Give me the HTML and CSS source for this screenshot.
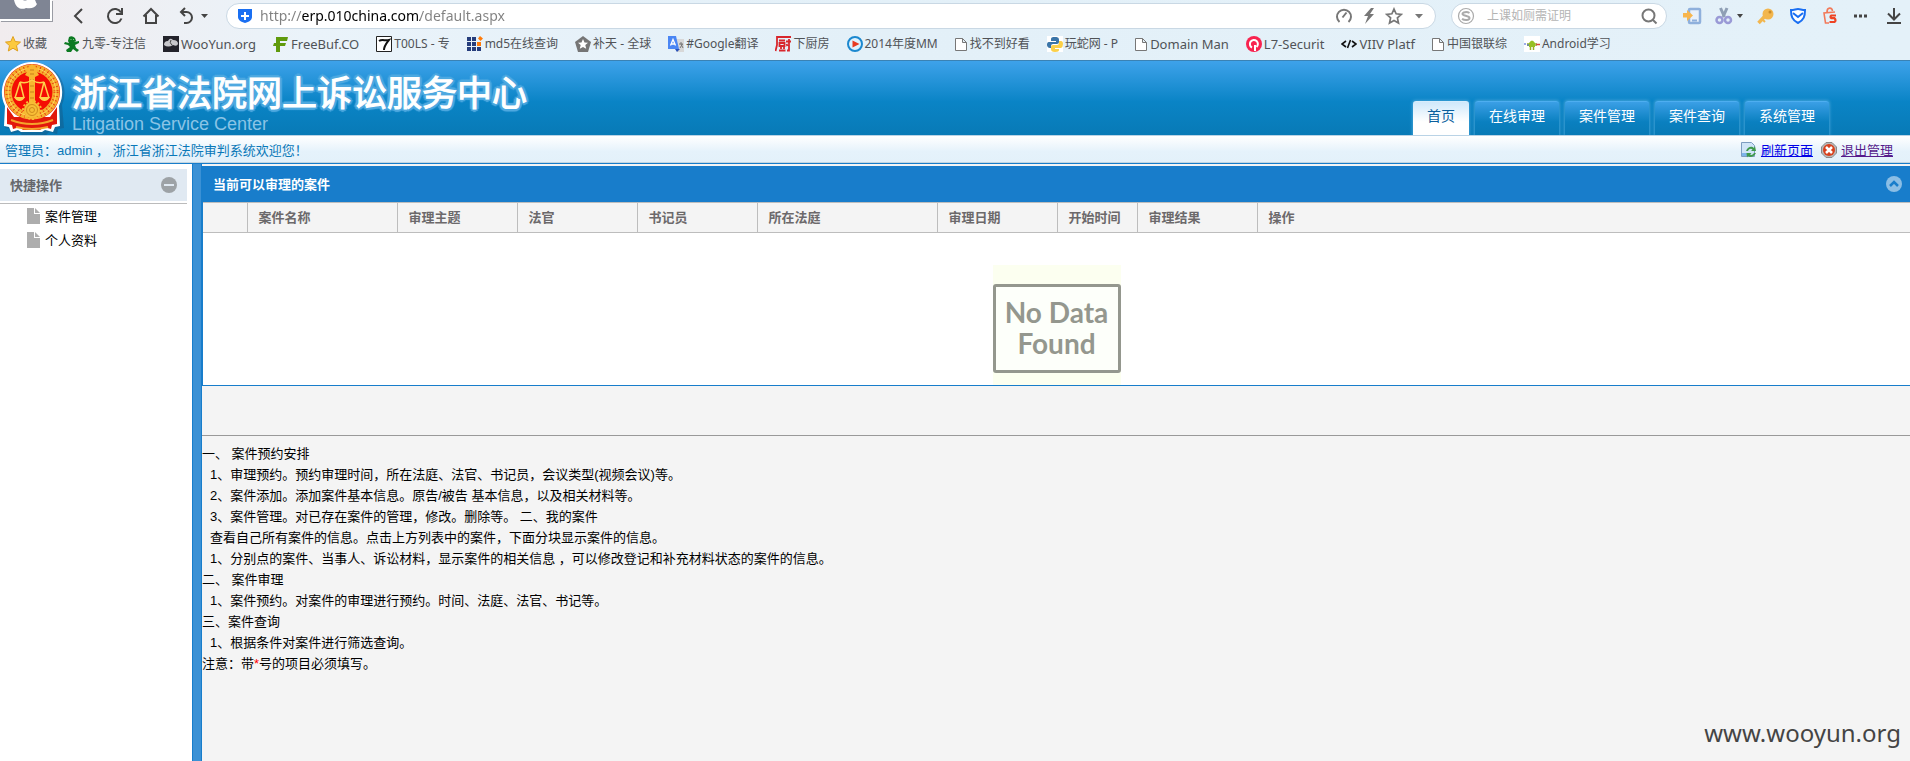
FILE: index.html
```html
<!DOCTYPE html>
<html lang="zh-CN">
<head>
<meta charset="utf-8">
<title>浙江省法院网上诉讼服务中心</title>
<link rel="stylesheet" href="styles.css">
</head>
<body>
<div class="browser">
  <div class="toolbar">
    <div class="avatar">
      <svg width="50" height="20" viewBox="0 0 50 20"><path d="M14 0h9q2 1 4 0h8c1 2 1 3 2 4-2 4-6 5-11 4-4 2-10 1-12-8z" fill="#fff"/></svg>
    </div>
    <div class="nav">
      <button class="tool" aria-label="后退"><svg width="20" height="20" viewBox="0 0 20 20"><path d="M13 3L6 10l7 7" fill="none" stroke="#444" stroke-width="2"/></svg></button>
      <button class="tool" aria-label="刷新"><svg width="20" height="20" viewBox="0 0 20 20"><path d="M16.500 12.500A7 7 0 1 1 16 6.500M17 2v6h-6" fill="none" stroke="#444" stroke-width="2"/></svg></button>
      <button class="tool" aria-label="主页"><svg width="20" height="20" viewBox="0 0 20 20"><path d="M2.500 10.500L10 3l7.500 7.500M5 9v8h10V9" fill="none" stroke="#444" stroke-width="2"/></svg></button>
      <button class="tool undo" aria-label="恢复"><svg width="32" height="20" viewBox="0 0 32 20"><path d="M8 2L4 6l4 4M4 6h5.500a5.500 5.500 0 0 1 0 11H7" fill="none" stroke="#444" stroke-width="2"/><path d="M24 8h7l-3.500 4z" fill="#444"/></svg></button>
    </div>
    <div class="address">
      <svg width="16" height="18" viewBox="0 0 16 18"><path d="M1 2h14v8c0 3-3 5-7 6-4-1-7-3-7-6z" fill="#1a6ff2"/><path d="M8 5v8M4 9h8" stroke="#fff" stroke-width="2"/></svg>
      <input class="url" type="text" aria-label="地址" value="http://erp.010china.com/default.aspx">
      <button class="tool small" aria-label="测速"><svg width="18" height="18" viewBox="0 0 18 18"><path d="M4.500 15a7 7 0 1 1 9 0M7.500 10.500l4-5" fill="none" stroke="#777" stroke-width="2"/></svg></button>
      <button class="tool small" aria-label="加速"><svg width="18" height="18" viewBox="0 0 18 18"><path d="M11 1L4 9h4l-3 8 9-10h-4l4-6z" fill="#777"/></svg></button>
      <button class="tool small" aria-label="收藏本页"><svg width="18" height="18" viewBox="0 0 18 18"><path d="M9 2l2.100 4.800 5.200.6-3.900 3.500 1.100 5.100L9 13.400 4.500 16l1.100-5.100L1.700 7.400l5.200-.6z" fill="none" stroke="#777" stroke-width="1.700"/></svg></button>
      <button class="tool small" aria-label="更多地址"><svg width="18" height="18" viewBox="0 0 18 18"><path d="M5 7h8l-4 4.500z" fill="#777"/></svg></button>
    </div>
    <div class="search">
      <svg width="18" height="18" viewBox="0 0 18 18"><circle cx="9" cy="9" r="7.500" fill="none" stroke="#aaa" stroke-width="1.200"/><path d="M12.500 6C10 4.500 5.500 5 5.500 7s7 1.500 7 4-5 2.500-7.500.8" fill="none" stroke="#aaa" stroke-width="2"/></svg>
      <input class="query" type="text" aria-label="搜索" placeholder="上课如厕需证明">
      <button class="tool small" aria-label="搜索"><svg width="18" height="18" viewBox="0 0 18 18"><circle cx="8.500" cy="8.500" r="6" fill="none" stroke="#777" stroke-width="2"/><path d="M12.500 12.500l4 4" stroke="#777" stroke-width="2"/></svg></button>
    </div>
    <div class="extras">
      <button class="tool" aria-label="手机"><svg width="20" height="20" viewBox="0 0 20 20"><rect x="7" y="3" width="11" height="14" rx="1" fill="#e8f0fa" stroke="#8fb0dc" stroke-width="2.500"/><path d="M10 14.500h5" stroke="#8fb0dc" stroke-width="2"/><path d="M1 7h4V4l6 5.500L5 15v-3.500H1z" fill="#f7b54c"/></svg></button>
      <button class="tool cut" aria-label="截图"><svg width="30" height="20" viewBox="0 0 30 20"><path d="M6.500 2l4 9M13 2L9 11" stroke="#8f9fb5" stroke-width="3"/><circle cx="5.500" cy="14" r="3" fill="none" stroke="#9a9ad6" stroke-width="2.500"/><circle cx="14" cy="14" r="3" fill="none" stroke="#9a9ad6" stroke-width="2.500"/><path d="M23 8h6l-3 4z" fill="#444"/></svg></button>
      <button class="tool" aria-label="密码"><svg width="20" height="20" viewBox="0 0 20 20"><path d="M10 9L2.500 17" stroke="#f2b64e" stroke-width="3.500"/><path d="M6 13l3 3" stroke="#f2b64e" stroke-width="2"/><circle cx="12" cy="8" r="5.500" fill="#f2b64e"/><circle cx="14" cy="6" r="1.500" fill="#c98a28"/></svg></button>
      <button class="tool" aria-label="安全"><svg width="20" height="20" viewBox="0 0 20 20"><path d="M3 4c3 0 5-1 7-1s4 1 7 1c0 6-1 10-7 13C4 14 3 10 3 4z" fill="#fff" stroke="#1a6ff2" stroke-width="2"/><path d="M5 7l5 4 5-4" fill="none" stroke="#1a6ff2" stroke-width="2"/></svg></button>
      <button class="tool" aria-label="购物"><svg width="20" height="20" viewBox="0 0 20 20"><path d="M15 6L4 7l1.500 10H9M7 6c0-5 5-5 5.500-1" fill="none" stroke="#f27a5a" stroke-width="1.600"/><path d="M16 9.500h-4.500q-2 1.500 0 2.700h3q2 2 0 3.800H9.500" fill="none" stroke="#ee4424" stroke-width="2.200"/></svg></button>
      <button class="tool" aria-label="菜单"><svg width="20" height="20" viewBox="0 0 20 20"><path d="M2 8.500h3v3H2zM7 8.500h3v3H7zM12 8.500h3v3h-3z" fill="#444"/></svg></button>
      <button class="tool" aria-label="下载"><svg width="20" height="20" viewBox="0 0 20 20"><path d="M10 2v11M4 7.500l6 6 6-6M3 17h14" fill="none" stroke="#444" stroke-width="2"/></svg></button>
    </div>
  </div>
  <nav class="bookmarks">
    <a href="#"><svg width="16" height="16" viewBox="0 0 16 16"><path d="M8 .5l2.200 5 5.300.6-4 3.500 1.200 5.400L8 12.200 3.300 15l1.200-5.400-4-3.500 5.300-.6z" fill="#fcca3f" stroke="#dfa01f"/></svg>收藏</a>
    <a href="#"><svg width="16" height="16" viewBox="0 0 16 16"><path d="M5 1q3-2 6 1l1 3-2 1 5-1v2l-4 2 1 3 3 2-2 2-4-3-2 3-4 0-1-2 4-3-2-2-4-1 1-2 4 1-1-2z" fill="#0c7a22"/><path d="M6.500 3h1v1h-1zM9 3h1v1H9z" fill="#7fd08a"/></svg>九零-专注信</a>
    <a class="latin" href="#"><svg width="16" height="16" viewBox="0 0 16 16"><path d="M0 0h16v16H0z" fill="#23232b"/><path d="M1 9q0-4 4-4 2-4 5-1 5 0 5 4-1 3-5 1-5 3-9 0z" fill="#c8c8cc"/><path d="M8 4q-2 3 1 5" stroke="#444" fill="none"/></svg>WooYun.org</a>
    <a class="latin" href="#"><svg width="16" height="16" viewBox="0 0 16 16"><path d="M3 1h12l-1 4H7v2h6l-1 3H7v6H3v-6H0l1-3h2z" fill="#5f9a0c"/></svg>FreeBuf.CO</a>
    <a href="#"><svg width="16" height="16" viewBox="0 0 16 16"><path d="M.5.500h15v15H.5z" fill="#fff" stroke="#222"/><path d="M3 5c3-2 6 0 10-1-3 4-5 6-5 10" fill="none" stroke="#111" stroke-width="2"/></svg>T00LS - 专</a>
    <a href="#"><svg width="16" height="16" viewBox="0 0 16 16"><path d="M0 1h4v4H0zM5 1h4v4H5zM0 6h4v4H0zM5 6h4v4H5zM0 11h4v4H0zM5 11h4v4H5zM10 11h4v4h-4z" fill="#263d7c"/><path d="M10 6h4v4h-4zM13 0l3 2.500L13.500 5 11 2.500z" fill="#ff7b0a"/></svg>md5在线查询</a>
    <a href="#"><svg width="16" height="16" viewBox="0 0 16 16"><path d="M8 0l8 6-3 10H3L0 6z" fill="#757575"/><path d="M8 3l1.500 3.500 3.500.3-2.700 2.300.9 3.700L8 11l-3.200 1.800.9-3.700L3 6.800l3.500-.3z" fill="#fff"/></svg>补天 - 全球</a>
    <a href="#"><svg width="16" height="16" viewBox="0 0 16 16"><path d="M7 3h9v13H9z" fill="#d8d8d8"/><path d="M0 0h8l3 13H0z" fill="#4a86f4"/><path d="M7 13h5l-3 3z" fill="#2850b8"/><path d="M2.500 9.500L5 3.500l2.500 6M3.500 8h3" stroke="#fff" fill="none" stroke-width="1.300"/><path d="M11 8h4M13 6v2l2 4M14.500 8L12 12" stroke="#777" fill="none"/></svg>#Google翻译</a>
    <a href="#"><svg width="16" height="16" viewBox="0 0 16 16"><path d="M16 1H2v8l-1.500 6M4 4.500h6M4.500 7h5v3h-5zM4 14.500h6.500M6 11v2M9 11v2M11 5.500h5M14 3v11.500h-2M11.500 8l1 2" fill="none" stroke="#d8262c" stroke-width="1.800"/></svg>下厨房</a>
    <a href="#"><svg width="16" height="16" viewBox="0 0 16 16"><circle cx="8" cy="8" r="7" fill="#dff2fd" stroke="#1b88cf" stroke-width="2"/><path d="M5.500 4.500l7 3.500-7 3.500z" fill="#e83a20"/></svg>2014年度MM</a>
    <a class="page" href="#"><svg width="12" height="16" viewBox="0 0 12 16"><path d="M.5 2.500h7l4 4v8H.5zM7.500 2.500v4h4" fill="#fff" stroke="#777"/></svg>找不到好看</a>
    <a href="#"><svg width="16" height="16" viewBox="0 0 16 16"><path d="M0 0h16v16H0z" fill="#fff"/><path d="M8 1c-3 0-4 0-4 3v1h5v1H2C0 6 0 8 0 9s1 3 3 3h1v-2q0-2 2-2h4q2 0 2-2V4c0-3-2-3-4-3z" fill="#3a75a8"/><path d="M12 5h2q2 0 2 3t-2 4H8v1h4v1c0 1-1 2-4 2s-4-1-4-3v-2q0-2 2-2h4q2 0 2-2z" fill="#fbd048"/></svg>玩蛇网 - P</a>
    <a class="latin page" href="#"><svg width="12" height="16" viewBox="0 0 12 16"><path d="M.5 2.500h7l4 4v8H.5zM7.500 2.500v4h4" fill="#fff" stroke="#777"/></svg>Domain Man</a>
    <a class="latin" href="#"><svg width="16" height="16" viewBox="0 0 16 16"><circle cx="8" cy="8" r="8" fill="#f8234f"/><path d="M6 11.500a4 4 0 1 1 4.500-.5M9 9v6" fill="none" stroke="#fff" stroke-width="2"/></svg>L7-Securit</a>
    <a class="latin" href="#"><svg width="16" height="16" viewBox="0 0 16 16"><path d="M5 5L1 8l4 3M11 5l4 3-4 3M9.500 4l-3 8" fill="none" stroke="#111" stroke-width="1.600"/></svg>VIIV Platf</a>
    <a class="page" href="#"><svg width="12" height="16" viewBox="0 0 12 16"><path d="M.5 2.500h7l4 4v8H.5zM7.500 2.500v4h4" fill="#fff" stroke="#777"/></svg>中国银联综</a>
    <a href="#"><svg width="16" height="16" viewBox="0 0 16 16"><path d="M0 0h16v16H0z" fill="#fff"/><path d="M5 7q3-5 6 0v4H5z" fill="#97c024"/><path d="M4 7v3M12 7v3M6.500 11v3M9.500 11v3" stroke="#97b024" stroke-width="1.500"/><path d="M12 8.500h4" stroke="#d34a3a" stroke-width="1.500"/><path d="M0 8h2M3 9h2" stroke="#3a5ad3"/></svg>Android学习</a>
  </nav>
</div>

<header class="banner">
  <svg class="emblem" width="66" height="74" viewBox="0 0 66 74">
    <path d="M32 1a30 30 0 0 1 28 42l2 23-6 1-1 5-8-2-3 3H20l-3-3-8 2-1-5-5-1 1-23A30 30 0 0 1 32 1z" fill="#1b4a70" opacity=".35" transform="translate(2 1)"/>
    <path d="M32 1a30.500 30.500 0 0 1 27 44l1 20-5 1-2 5-8-2-3 2H21l-3-2-7 2-2-5-5-1 1-20A30.500 30.500 0 0 1 32 1z" fill="#fff"/>
    <path d="M7 46l7 10h36l7-10v17l-5 1-1 4-7-2-4 3H23l-3-3-7 2-1-4-5-1z" fill="#e2180c"/>
    <circle cx="32" cy="31" r="28" fill="#e9230c"/>
    <circle cx="32" cy="31" r="24" fill="none" stroke="#f6ae2e" stroke-width="7"/>
    <circle cx="32" cy="31" r="24" fill="none" stroke="#e8440f" stroke-width="5" stroke-dasharray="1 3"/>
    <circle cx="32" cy="31" r="24" fill="none" stroke="#ffd75a" stroke-width="1"/>
    <circle cx="32" cy="31" r="20" fill="#f50c04"/>
    <path d="M32 3l3 3 3 1-1 4 2 3-4 2v26h-6V16l-4-2 2-3-2-3 4-2z" fill="#f8b62f"/>
    <path d="M30 9h4M30 13h4M30 19h4M30 25h4M30 31h4M30 37h4" stroke="#c9801a"/>
    <path d="M20 21q6 2 12-2 6 4 12 2M20 21l-5 16M20 21l4 16M44 21l-4 16M44 21l5 16" fill="none" stroke="#ffd04a" stroke-width="1.500"/>
    <path d="M14 36h11q-2 4-5.500 4T14 36zM39 36h11q-2 4-5.500 4T39 36z" fill="#ffd04a"/>
    <circle cx="32" cy="49" r="8" fill="#f7bd36"/><circle cx="32" cy="49" r="9" fill="none" stroke="#f7bd36" stroke-width="2" stroke-dasharray="2 2"/>
    <circle cx="32" cy="49" r="5.500" fill="none" stroke="#d08c1c"/><circle cx="32" cy="49" r="2.500" fill="none" stroke="#d08c1c"/>
    <path d="M11 59q10 4 21 4t21-4M16 66q8 2 16 2t16-2" fill="none" stroke="#f5a32b" stroke-width="2"/>
  </svg>
  <div class="brand">
    <h1>浙江省法院网上诉讼服务中心</h1>
    <p>Litigation Service Center</p>
  </div>
  <nav class="tabs">
    <a class="tab active" href="#">首页</a>
    <a class="tab" href="#">在线审理</a>
    <a class="tab" href="#">案件管理</a>
    <a class="tab" href="#">案件查询</a>
    <a class="tab" href="#">系统管理</a>
  </nav>
</header>

<div class="infobar">
  <p class="welcome">管理员：admin ， 浙江省浙江法院审判系统欢迎您！</p>
  <a class="action" href="#"><svg width="16" height="16" viewBox="0 0 16 16"><path d="M.5.500h10l3 3v11H.5z" fill="#cfe4f7" stroke="#7c9cc0"/><path d="M1 11h7v3H1z" fill="#7db4ea"/><path d="M5 9c2-5 6-5 8-3l1-2 1 5h-5l1.500-1.500C10 6 8 7 7 9zM15 11c-2 4-6 5-8 3l-1 1.500L5.500 11h5L9 12.500c2 1 3 0 4-1.500z" fill="#3f9a4a"/></svg><span>刷新页面</span></a>
  <a class="action visited" href="#"><svg width="16" height="16" viewBox="0 0 16 16"><path d="M5 .500h6L15.500 5v6L11 15.500H5L.5 11V5z" fill="#b9b9b9" stroke="#8a8a8a"/><circle cx="8" cy="8" r="6" fill="#d8411d"/><path d="M5 5l6 6M11 5l-6 6" stroke="#fff" stroke-width="2.500"/></svg><span>退出管理</span></a>
</div>

<div class="workspace">
  <aside class="sidebar">
    <div class="sidehead">
      <h2>快捷操作</h2>
      <button class="tool round" aria-label="折叠"><svg width="16" height="16" viewBox="0 0 16 16"><circle cx="8" cy="8" r="8" fill="#9da2a6"/><path d="M3 8h10" stroke="#e0e9f2" stroke-width="2"/></svg></button>
    </div>
    <ul class="menu">
      <li><a href="#"><svg width="13" height="16" viewBox="0 0 13 16"><path d="M0 0h7v6h6v10H0z" fill="#adadad"/><path d="M8 0l5 5H8z" fill="#adadad"/></svg>案件管理</a></li>
      <li><a href="#"><svg width="13" height="16" viewBox="0 0 13 16"><path d="M0 0h7v6h6v10H0z" fill="#adadad"/><path d="M8 0l5 5H8z" fill="#adadad"/></svg>个人资料</a></li>
    </ul>
  </aside>
  <div class="splitter"></div>
  <main class="content">
    <section class="panel">
      <div class="panelhead">
        <h2>当前可以审理的案件</h2>
        <button class="tool round" aria-label="收起"><svg width="16" height="16" viewBox="0 0 16 16"><circle cx="8" cy="8" r="8" fill="#8bbee5"/><path d="M4 10l4-4 4 4" fill="none" stroke="#187dcb" stroke-width="2.500"/></svg></button>
      </div>
      <table class="cases">
        <colgroup><col class="c-mark"><col class="c-name"><col class="c-mid"><col class="c-mid"><col class="c-mid"><col class="c-court"><col class="c-mid"><col class="c-time"><col class="c-mid"><col></colgroup>
        <thead>
          <tr><th></th><th>案件名称</th><th>审理主题</th><th>法官</th><th>书记员</th><th>所在法庭</th><th>审理日期</th><th>开始时间</th><th>审理结果</th><th>操作</th></tr>
        </thead>
        <tbody>
          <tr><td colspan="10"><div class="nodata"><div class="stamp">No Data<br>Found</div></div></td></tr>
        </tbody>
      </table>
    </section>
    <hr class="rule">
    <div class="notes">
      <p>一、 案件预约安排</p>
      <p class="sub">1、审理预约。预约审理时间，所在法庭、法官、书记员，会议类型(视频会议)等。</p>
      <p class="sub">2、案件添加。添加案件基本信息。原告/被告 基本信息，以及相关材料等。</p>
      <p class="sub">3、案件管理。对已存在案件的管理，修改。删除等。 二、我的案件</p>
      <p class="sub">查看自己所有案件的信息。点击上方列表中的案件，下面分块显示案件的信息。</p>
      <p class="sub">1、分别点的案件、当事人、诉讼材料，显示案件的相关信息 ，可以修改登记和补充材料状态的案件的信息。</p>
      <p>二、 案件审理</p>
      <p class="sub">1、案件预约。对案件的审理进行预约。时间、法庭、法官、书记等。</p>
      <p>三、案件查询</p>
      <p class="sub">1、根据条件对案件进行筛选查询。</p>
      <p>注意：带<span class="star">*</span>号的项目必须填写。</p>
    </div>
    <p class="site">www.wooyun.org</p>
  </main>
</div>
</body>
</html>
```

FILE: styles.css
```css
* { box-sizing: border-box; }
body {
  margin: 0;
  min-height: 100vh;
  display: flex;
  flex-direction: column;
  background: #f4f4f4;
  color: #000;
  font: 13px/21px "Liberation Sans", "Noto Sans CJK SC", sans-serif;
}
h1, h2, p, ul { margin: 0; padding: 0; }
svg { display: block; flex: none; }
a { text-decoration: none; }

/* browser chrome */
.browser {
  height: 61px;
  border-bottom: 1px solid #3a82b4;
  background: linear-gradient(90deg, #f1ecee, #eaf3fa 16%, #e3f0f8 45%, #e4f1f9);
  font-family: "Noto Sans", "Noto Sans CJK SC", sans-serif;
}
.toolbar { display: flex; align-items: flex-start; padding-right: 6px; height: 28px; }
.avatar {
  width: 52px;
  height: 21px;
  margin-right: 17px;
  background: #7f8594;
  border: solid #fff;
  border-width: 0 2px 2px 0;
  box-shadow: 1px 1px 0 #9a9ca4;
}
.tool {
  display: flex;
  align-items: center;
  justify-content: center;
  flex: none;
  width: 20px;
  height: 20px;
  padding: 0;
  border: 0;
  background: none;
}
.tool.undo { width: 32px; }
.tool.cut { width: 30px; }
.tool.small { width: 18px; height: 18px; }
.tool.round { width: 16px; height: 16px; }
.nav { display: flex; gap: 16px; padding-top: 6px; margin-right: 17px; }
.extras { display: flex; gap: 12px; padding-top: 6px; }
.address, .search {
  display: flex;
  align-items: center;
  height: 26px;
  margin-top: 3px;
  margin-right: 15px;
  border: 1px solid #c9d8e4;
  border-radius: 13px;
  background: #fff;
}
.address { flex: 1; padding: 0 7px 0 10px; gap: 7px; }
.search { flex: none; width: 216px; padding: 0 8px 0 5px; gap: 12px; }
.url, .query {
  flex: 1;
  min-width: 0;
  padding: 0;
  border: 0;
  outline: 0;
  background: none;
  font: 14px/20px "Noto Sans", "Noto Sans CJK SC", sans-serif;
}
.url {
  color: transparent;
  background: linear-gradient(90deg, #808080 42px, #000 42px 160px, #808080 160px);
  -webkit-background-clip: text;
  background-clip: text;
}
.query { font-size: 12px; }
.query::placeholder { color: #b4b4b4; opacity: 1; }
.bookmarks { display: flex; gap: 17px; padding: 6px 0 0 5px; white-space: nowrap; }
.bookmarks a {
  display: flex;
  align-items: center;
  gap: 2px;
  color: #505357;
  font-size: 12px;
  line-height: 20px;
}
.bookmarks .latin { font-size: 13px; }
.bookmarks .page { gap: 3px; }

/* site header */
.banner {
  display: flex;
  height: 74px;
  background: linear-gradient(#3ea2ea, #0a84c6 55%, #087ab6);
}
.brand { padding: 13px 0 0 6px; }
.brand h1 {
  color: #fff;
  font-size: 35px;
  line-height: 40px;
  font-weight: 400;
  -webkit-text-stroke: 1px #fff;
  text-shadow: 3px 0 1px #4fa9e0, -3px 0 1px #4fa9e0, 0 3px 1px #4fa9e0, 0 -3px 1px #4fa9e0, 2px 2px 1px #4fa9e0, -2px -2px 1px #4fa9e0, 2px -2px 1px #4fa9e0, -2px 2px 1px #4fa9e0;
  white-space: nowrap;
}
.brand p { color: #8ac4e6; font-size: 18px; line-height: 20px; }
.tabs { display: flex; align-items: flex-end; gap: 6px; margin-left: auto; padding-right: 81px; }
.tab {
  height: 34px;
  padding: 0 14px;
  color: #fff;
  font-size: 14px;
  line-height: 28px;
  background: linear-gradient(#3b9fe6, #0a80c0 60%, #087ab6);
  border-radius: 3px 3px 0 0;
  box-shadow: 0 0 3px 1px #3fa0d6;
  border-top: 1px solid #4eaef0;
  white-space: nowrap;
}
.tab.active { color: #0b5f9d; border-color: #d8edfc; background: linear-gradient(#cfe8fb, #fff 60%); }
.infobar {
  display: flex;
  align-items: center;
  gap: 8px;
  height: 28px;
  padding: 2px 17px 0 5px;
  border-top: 1px solid #b9d3e6;
  border-bottom: 1px solid #c3d5e0;
  background: linear-gradient(#fff, #e5f2fb 60%, #e3f1fa);
}
.welcome { margin-right: auto; color: #0a78b8; }
.action { display: flex; align-items: center; gap: 4px; color: #0000e6; }
.action span { text-decoration: underline; }
.action.visited { color: #551a8b; }

/* workspace */
.workspace { display: flex; flex: 1; border-top: 1px solid #177dcb; }
.sidebar { flex: none; width: 192px; padding: 5px 5px 0 0; background: #fff; }
.sidehead {
  display: flex;
  align-items: center;
  justify-content: space-between;
  height: 35px;
  padding: 0 10px 2px;
  border-bottom: 1px solid #bbb;
  background: linear-gradient(#e0e9f2 32px, #fff 32px);
}
.sidehead h2 { color: #66686c; font-size: 13px; }
.menu { list-style: none; }
.menu a { display: flex; align-items: center; gap: 5px; height: 24px; padding-left: 27px; color: #000; }
.splitter { flex: none; width: 10px; background: #3b91d5; border: solid #177dcb; border-width: 0 1px; }
.content { display: flex; flex-direction: column; flex: 1; min-width: 0; padding-top: 2px; }
.panel { background: #fff; border: solid #177dcb; border-width: 0 0 1px 1px; }
.panelhead {
  display: flex;
  align-items: center;
  justify-content: space-between;
  height: 36px;
  padding: 0 8px 0 10px;
  background: #187dcb;
}
.panelhead h2 { color: #fff; font-size: 13px; }
.cases { width: 100%; table-layout: fixed; border-collapse: collapse; }
.cases th {
  height: 30px;
  padding: 0 0 0 11px;
  border: 1px solid #bdbdbd;
  border-left: 0;
  background: #f4f4f4;
  color: #6c696b;
  text-align: left;
  white-space: nowrap;
}
.cases th:last-child { border-right: 0; }
.cases td { padding: 32px 0 0; }
.c-mark { width: 44px; }
.c-name { width: 150px; }
.c-mid { width: 120px; }
.c-court { width: 180px; }
.c-time { width: 80px; }
.nodata { width: 128px; margin: 0 auto; padding: 19px 0 12px; background: #fcfff0; }
.stamp {
  padding: 10px 0 11px;
  border: 3px solid #94978e;
  border-radius: 3px;
  background: #fdfffa;
  color: #94978e;
  font: bold 28px/31px Lato, sans-serif;
  text-align: center;
}
.rule { align-self: stretch; height: 1px; margin: 49px 0 7px; border: 0; background: #999; }
.sub { padding-left: 8px; }
.star { color: #f00; }
.site {
  margin-top: auto;
  padding: 0 9px 12px;
  align-self: flex-end;
  color: #444;
  font: 24px/33px "Noto Sans", sans-serif;
}
```
